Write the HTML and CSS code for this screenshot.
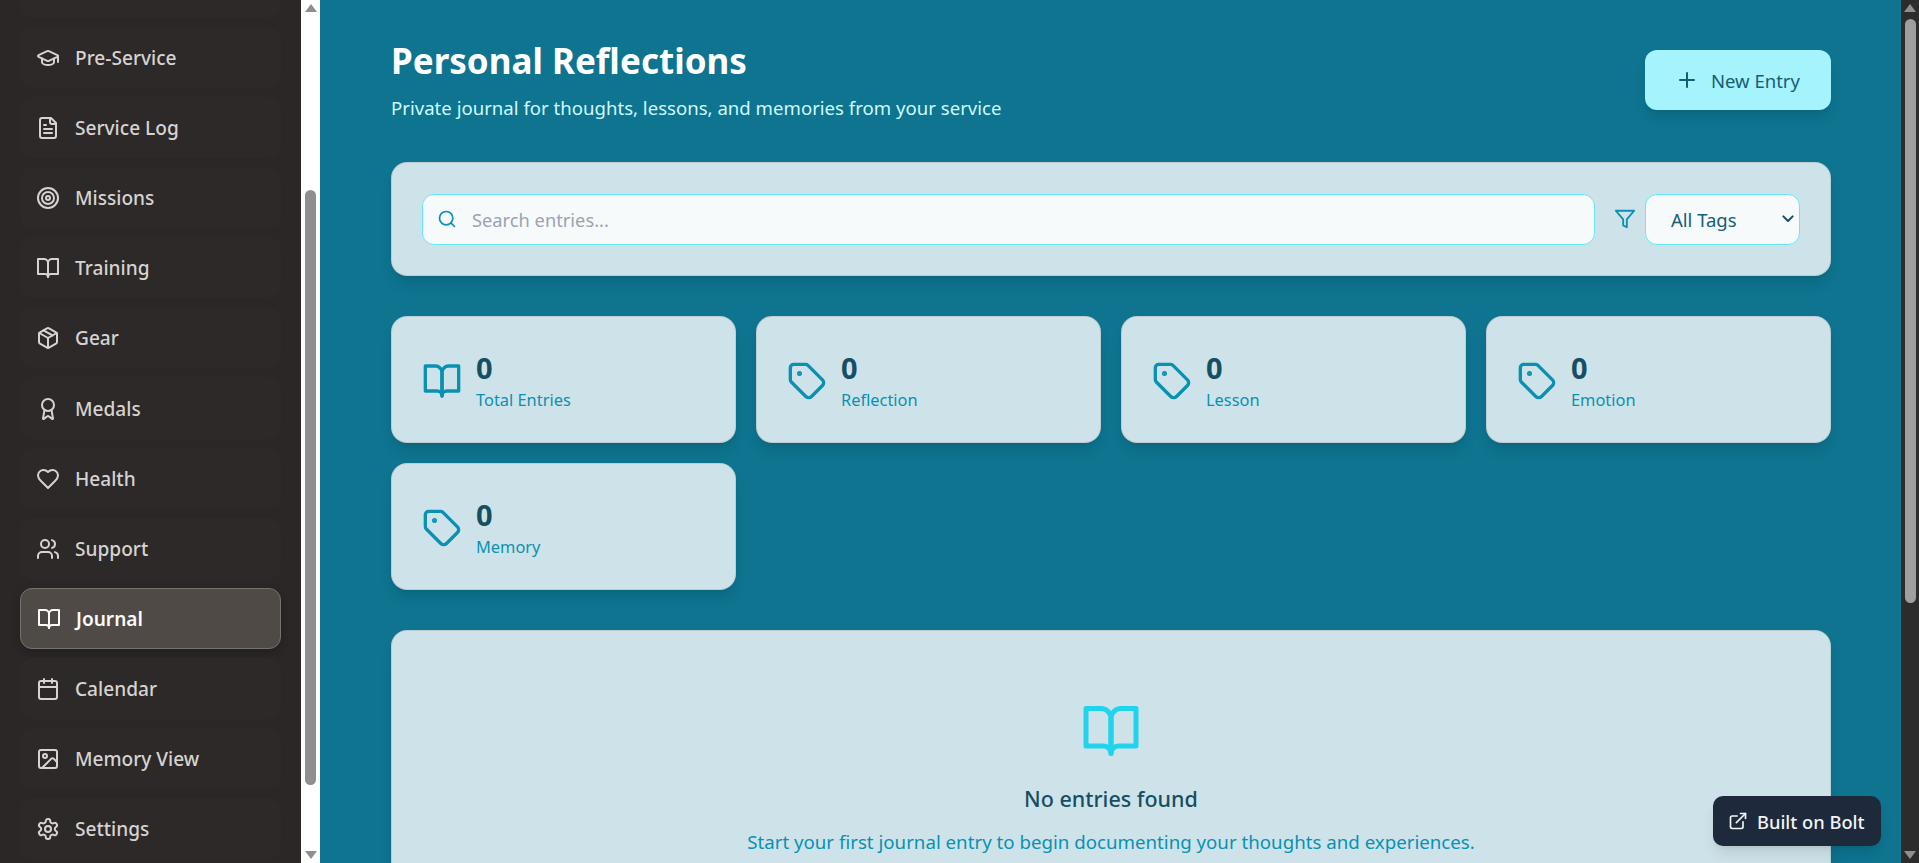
FILE: index.html
```html
<!DOCTYPE html>
<html lang="en">
<head>
  <meta charset="UTF-8">
  <meta name="viewport" content="width=device-width, initial-scale=1.0">
  <title>Personal Reflections</title>
  <link rel="stylesheet" href="styles.css">
</head>
<body>
  <svg class="sprites" width="0" height="0">
    <symbol id="i-book" viewBox="0 0 24 24"><path d="M2 3h6a4 4 0 0 1 4 4v14a3 3 0 0 0-3-3H2z"/><path d="M22 3h-6a4 4 0 0 0-4 4v14a3 3 0 0 1 3-3h7z"/></symbol>
    <symbol id="i-tag" viewBox="0 0 24 24"><path d="M12.586 2.586A2 2 0 0 0 11.172 2H4a2 2 0 0 0-2 2v7.172a2 2 0 0 0 .586 1.414l8.704 8.704a2.426 2.426 0 0 0 3.42 0l6.58-6.58a2.426 2.426 0 0 0 0-3.42z"/><circle cx="7.5" cy="7.5" r=".5" fill="currentColor"/></symbol>
  </svg>

  <aside class="sidebar">
    <nav class="nav">
      <div class="nav-cut"></div>
      <a class="nav-item">
        <svg class="nav-icon" viewBox="0 0 24 24"><path d="M21.42 10.922a1 1 0 0 0-.019-1.838L12.83 5.18a2 2 0 0 0-1.66 0L2.6 9.08a1 1 0 0 0 0 1.832l8.57 3.908a2 2 0 0 0 1.66 0z"/><path d="M22 10v6"/><path d="M6 12.5V16a6 3 0 0 0 12 0v-3.5"/></svg>
        Pre-Service
      </a>
      <a class="nav-item">
        <svg class="nav-icon" viewBox="0 0 24 24"><path d="M15 2H6a2 2 0 0 0-2 2v16a2 2 0 0 0 2 2h12a2 2 0 0 0 2-2V7Z"/><path d="M14 2v4a2 2 0 0 0 2 2h4"/><path d="M10 9H8"/><path d="M16 13H8"/><path d="M16 17H8"/></svg>
        Service Log
      </a>
      <a class="nav-item">
        <svg class="nav-icon" viewBox="0 0 24 24"><circle cx="12" cy="12" r="10"/><circle cx="12" cy="12" r="6"/><circle cx="12" cy="12" r="2"/></svg>
        Missions
      </a>
      <a class="nav-item">
        <svg class="nav-icon"><use href="#i-book"/></svg>
        Training
      </a>
      <a class="nav-item">
        <svg class="nav-icon" viewBox="0 0 24 24"><path d="M11 21.73a2 2 0 0 0 2 0l7-4A2 2 0 0 0 21 16V8a2 2 0 0 0-1-1.73l-7-4a2 2 0 0 0-2 0l-7 4A2 2 0 0 0 3 8v8a2 2 0 0 0 1 1.73z"/><path d="M12 22V12"/><path d="m3.3 7 8.7 5 8.7-5"/><path d="m7.5 4.27 9 5.15"/></svg>
        Gear
      </a>
      <a class="nav-item">
        <svg class="nav-icon" viewBox="0 0 24 24"><path d="m15.477 12.89 1.515 8.526a.5.5 0 0 1-.81.47l-3.58-2.687a1 1 0 0 0-1.197 0l-3.586 2.686a.5.5 0 0 1-.81-.469l1.514-8.526"/><circle cx="12" cy="8" r="6"/></svg>
        Medals
      </a>
      <a class="nav-item">
        <svg class="nav-icon" viewBox="0 0 24 24"><path d="M19 14c1.49-1.46 3-3.21 3-5.5A5.5 5.5 0 0 0 16.5 3c-1.76 0-3 .5-4.500 2-1.500-1.500-2.740-2-4.500-2A5.500 5.500 0 0 0 2 8.500c0 2.300 1.500 4.050 3 5.500l7 7Z"/></svg>
        Health
      </a>
      <a class="nav-item">
        <svg class="nav-icon" viewBox="0 0 24 24"><path d="M16 21v-2a4 4 0 0 0-4-4H6a4 4 0 0 0-4 4v2"/><circle cx="9" cy="7" r="4"/><path d="M22 21v-2a4 4 0 0 0-3-3.870"/><path d="M16 3.130a4 4 0 0 1 0 7.750"/></svg>
        Support
      </a>
      <a class="nav-item nav-item-active">
        <svg class="nav-icon"><use href="#i-book"/></svg>
        Journal
      </a>
      <a class="nav-item">
        <svg class="nav-icon" viewBox="0 0 24 24"><path d="M8 2v4"/><path d="M16 2v4"/><rect x="3" y="4" width="18" height="18" rx="2"/><path d="M3 10h18"/></svg>
        Calendar
      </a>
      <a class="nav-item">
        <svg class="nav-icon" viewBox="0 0 24 24"><rect x="3" y="3" width="18" height="18" rx="2"/><circle cx="9" cy="9" r="2"/><path d="m21 15-3.086-3.086a2 2 0 0 0-2.828 0L6 21"/></svg>
        Memory View
      </a>
      <a class="nav-item">
        <svg class="nav-icon" viewBox="0 0 24 24"><path d="M12.220 2h-.440a2 2 0 0 0-2 2v.180a2 2 0 0 1-1 1.730l-.430.250a2 2 0 0 1-2 0l-.150-.080a2 2 0 0 0-2.730.730l-.220.380a2 2 0 0 0 .730 2.730l.150.100a2 2 0 0 1 1 1.720v.510a2 2 0 0 1-1 1.740l-.150.090a2 2 0 0 0-.730 2.730l.220.380a2 2 0 0 0 2.730.730l.150-.080a2 2 0 0 1 2 0l.430.250a2 2 0 0 1 1 1.730V20a2 2 0 0 0 2 2h.440a2 2 0 0 0 2-2v-.180a2 2 0 0 1 1-1.730l.430-.250a2 2 0 0 1 2 0l.150.080a2 2 0 0 0 2.730-.730l.220-.390a2 2 0 0 0-.730-2.730l-.150-.080a2 2 0 0 1-1-1.740v-.500a2 2 0 0 1 1-1.740l.150-.090a2 2 0 0 0 .730-2.730l-.220-.380a2 2 0 0 0-2.730-.730l-.150.080a2 2 0 0 1-2 0l-.430-.250a2 2 0 0 1-1-1.730V4a2 2 0 0 0-2-2z"/><circle cx="12" cy="12" r="3"/></svg>
        Settings
      </a>
    </nav>
  </aside>

  <div class="rail rail-side">
    <span class="arrow arrow-up"></span>
    <span class="thumb thumb-side"></span>
    <span class="arrow arrow-down"></span>
  </div>

  <main class="main">
    <header class="page-head">
      <div>
        <h1>Personal Reflections</h1>
        <p>Private journal for thoughts, lessons, and memories from your service</p>
      </div>
      <button class="btn-new">
        <svg viewBox="0 0 24 24"><path d="M5 12h14"/><path d="M12 5v14"/></svg>
        New Entry
      </button>
    </header>

    <section class="card toolbar">
      <label class="search">
        <svg viewBox="0 0 24 24"><circle cx="11" cy="11" r="8"/><path d="m21 21-4.300-4.300"/></svg>
        <input type="text" placeholder="Search entries...">
      </label>
      <svg class="filter-icon" viewBox="0 0 24 24"><polygon points="22 3 2 3 10 12.460 10 19 14 21 14 12.460 22 3"/></svg>
      <div class="tag-select">
        All Tags
        <svg viewBox="0 0 24 24"><path d="m5 8 7 7 7-7"/></svg>
      </div>
    </section>

    <section class="stats">
      <div class="card stat">
        <svg class="stat-icon"><use href="#i-book"/></svg>
        <div><div class="stat-value">0</div><div class="stat-label">Total Entries</div></div>
      </div>
      <div class="card stat">
        <svg class="stat-icon"><use href="#i-tag"/></svg>
        <div><div class="stat-value">0</div><div class="stat-label">Reflection</div></div>
      </div>
      <div class="card stat">
        <svg class="stat-icon"><use href="#i-tag"/></svg>
        <div><div class="stat-value">0</div><div class="stat-label">Lesson</div></div>
      </div>
      <div class="card stat">
        <svg class="stat-icon"><use href="#i-tag"/></svg>
        <div><div class="stat-value">0</div><div class="stat-label">Emotion</div></div>
      </div>
      <div class="card stat">
        <svg class="stat-icon"><use href="#i-tag"/></svg>
        <div><div class="stat-value">0</div><div class="stat-label">Memory</div></div>
      </div>
    </section>

    <section class="card empty">
      <svg class="empty-icon"><use href="#i-book"/></svg>
      <h3>No entries found</h3>
      <p>Start your first journal entry to begin documenting your thoughts and experiences.</p>
    </section>

    <a class="bolt">
      <svg viewBox="0 0 24 24"><path d="M15 3h6v6"/><path d="M10 14 21 3"/><path d="M18 13v6a2 2 0 0 1-2 2H5a2 2 0 0 1-2-2V8a2 2 0 0 1 2-2h6"/></svg>
      Built on Bolt
    </a>
  </main>

  <div class="rail rail-page">
    <span class="arrow arrow-up"></span>
    <span class="thumb thumb-page"></span>
    <span class="arrow arrow-down"></span>
  </div>
</body>
</html>
```

FILE: styles.css
```css
* {
  box-sizing: border-box;
}
html, body {
  height: 100%;
  margin: 0;
}
body {
  display: flex;
  overflow: hidden;
  font-family: "Noto Sans", "Open Sans", sans-serif;
  color: #164e63;
}
svg {
  fill: none;
  stroke: currentColor;
  stroke-width: 2;
  stroke-linecap: round;
  stroke-linejoin: round;
  flex: none;
}
.sprites {
  position: absolute;
}

/* sidebar */
.sidebar {
  width: 301px;
  flex: none;
  background: #2a2726;
  overflow: hidden;
}
.nav {
  display: flex;
  flex-direction: column;
  gap: 9px;
  padding: 0 20px;
}
.nav-cut {
  height: 18px;
  background: #2c2928;
  border-radius: 0 0 12px 12px;
}
.nav-item {
  display: flex;
  align-items: center;
  gap: 15px;
  height: 61.1px;
  padding: 1px 16px 0;
  background: #2c2928;
  border-radius: 12px;
  color: #d6d3d1;
  font-size: 19.1px;
  font-weight: 500;
}
.nav-icon {
  width: 24px;
  height: 24px;
}
.nav-item-active {
  background: #4f4a46;
  border: 1px solid #78716c;
  color: #fafaf9;
  font-weight: 600;
  box-shadow: 0 4px 10px rgba(0,0,0,0.2);
}

/* fake scrollbars */
.rail {
  width: 19px;
  flex: none;
  display: flex;
  flex-direction: column;
  align-items: center;
  height: 100%;
}
.rail-side {
  background: #fff;
}
.rail-page {
  width: 18px;
  background: #2c2c2c;
}
.thumb {
  width: 11px;
  border-radius: 6px;
  background: #8f8f8f;
}
.thumb-side {
  height: 595px;
  margin-top: 178px;
}
.thumb-page {
  height: 584px;
  margin-top: 7px;
  background: #9f9f9f;
}
.arrow {
  width: 0;
  height: 0;
  border-left: 6px solid transparent;
  border-right: 6px solid transparent;
}
.arrow-up {
  margin-top: 4px;
  border-bottom: 8px solid #8f8f8f;
}
.arrow-down {
  margin-top: auto;
  margin-bottom: 4px;
  border-top: 8px solid #8f8f8f;
}

/* main */
.main {
  flex: 1;
  min-width: 0;
  background: #0e7490;
  padding: 41px 70px 0 71px;
  overflow: hidden;
  position: relative;
}
.page-head {
  display: flex;
  justify-content: space-between;
  align-items: flex-start;
  margin-bottom: 40px;
}
h1 {
  margin: 0 0 13px;
  font-size: 35px;
  line-height: 40px;
  font-weight: 700;
  color: #fff;
}
.page-head p {
  margin: 0;
  font-size: 18.6px;
  line-height: 28px;
  color: #cffafe;
}
.btn-new {
  display: flex;
  align-items: center;
  gap: 12px;
  width: 186px;
  height: 60px;
  margin-top: 9px;
  padding: 0 30px;
  border: none;
  border-radius: 12px;
  background: #a5f3fc;
  color: #155e75;
  white-space: nowrap;
  font: 400 18.5px "Noto Sans", "Open Sans", sans-serif;
  box-shadow: 0 10px 15px -3px rgba(0,0,0,0.1), 0 4px 6px -4px rgba(0,0,0,0.1);
}
.btn-new svg {
  width: 24px;
  height: 24px;
}
.card {
  background: rgba(255,255,255,0.8);
  border: 1px solid rgba(120,113,108,0.2);
  border-radius: 16px;
  box-shadow: 0 10px 15px -3px rgba(0,0,0,0.1), 0 4px 6px -4px rgba(0,0,0,0.1);
}
.toolbar {
  display: flex;
  align-items: center;
  height: 114px;
  padding: 0 30px;
  margin-bottom: 40px;
}
.search {
  flex: 1;
  display: flex;
  align-items: center;
  gap: 13px;
  height: 51px;
  padding: 0 14px;
  background: #f6fafb;
  border: 1px solid #67e8f9;
  border-radius: 12px;
  color: #0891b2;
}
.search svg {
  width: 20px;
  height: 20px;
}
.search input {
  flex: 1;
  border: none;
  outline: none;
  background: transparent;
  font: 18.3px "Noto Sans", "Open Sans", sans-serif;
  color: #164e63;
}
.search input::placeholder {
  color: #9ca3af;
}
.filter-icon {
  width: 22px;
  height: 22px;
  margin: 0 9px 0 19px;
  color: #0891b2;
}
.tag-select {
  display: flex;
  align-items: center;
  justify-content: space-between;
  width: 155px;
  height: 51px;
  padding: 0 3px 0 25px;
  background: #f6fafb;
  border: 1px solid #67e8f9;
  border-radius: 12px;
  font-size: 18.5px;
  color: #155e75;
}
.tag-select svg {
  width: 16px;
  height: 16px;
  stroke-width: 3;
  color: #164e63;
}
.stats {
  display: grid;
  grid-template-columns: repeat(4, 1fr);
  gap: 20px;
  margin-bottom: 40px;
}
.stat {
  display: flex;
  align-items: center;
  gap: 14px;
  height: 127px;
  padding: 2px 30px 0;
}
.stat-icon {
  width: 40px;
  height: 40px;
  color: #0891b2;
}
.stat-value {
  font-size: 29px;
  line-height: 36px;
  font-weight: 700;
  color: #164e63;
}
.stat-label {
  margin-top: 2px;
  font-size: 16.4px;
  line-height: 24px;
  color: #0891b2;
}
.empty {
  display: flex;
  flex-direction: column;
  align-items: center;
  height: 600px;
  padding-top: 70px;
  text-align: center;
}
.empty-icon {
  width: 60px;
  height: 60px;
  color: #22d3ee;
}
.empty h3 {
  margin: 23px 0 14px;
  font-size: 21.5px;
  line-height: 30px;
  font-weight: 500;
  color: #164e63;
}
.empty p {
  margin: 0;
  font-size: 18.7px;
  line-height: 28px;
  color: #0891b2;
}

/* badge over the page */
.bolt {
  position: absolute;
  right: 20px;
  bottom: 17px;
  display: flex;
  align-items: center;
  gap: 9px;
  width: 168px;
  height: 50px;
  padding: 0 15px;
  background: #1e293b;
  border-radius: 10px;
  color: #f1f5f9;
  font-size: 18.3px;
  font-weight: 500;
  white-space: nowrap;
  box-shadow: 0 10px 15px -3px rgba(0,0,0,0.1), 0 4px 6px -4px rgba(0,0,0,0.1);
}
.bolt svg {
  width: 20px;
  height: 20px;
}
```
